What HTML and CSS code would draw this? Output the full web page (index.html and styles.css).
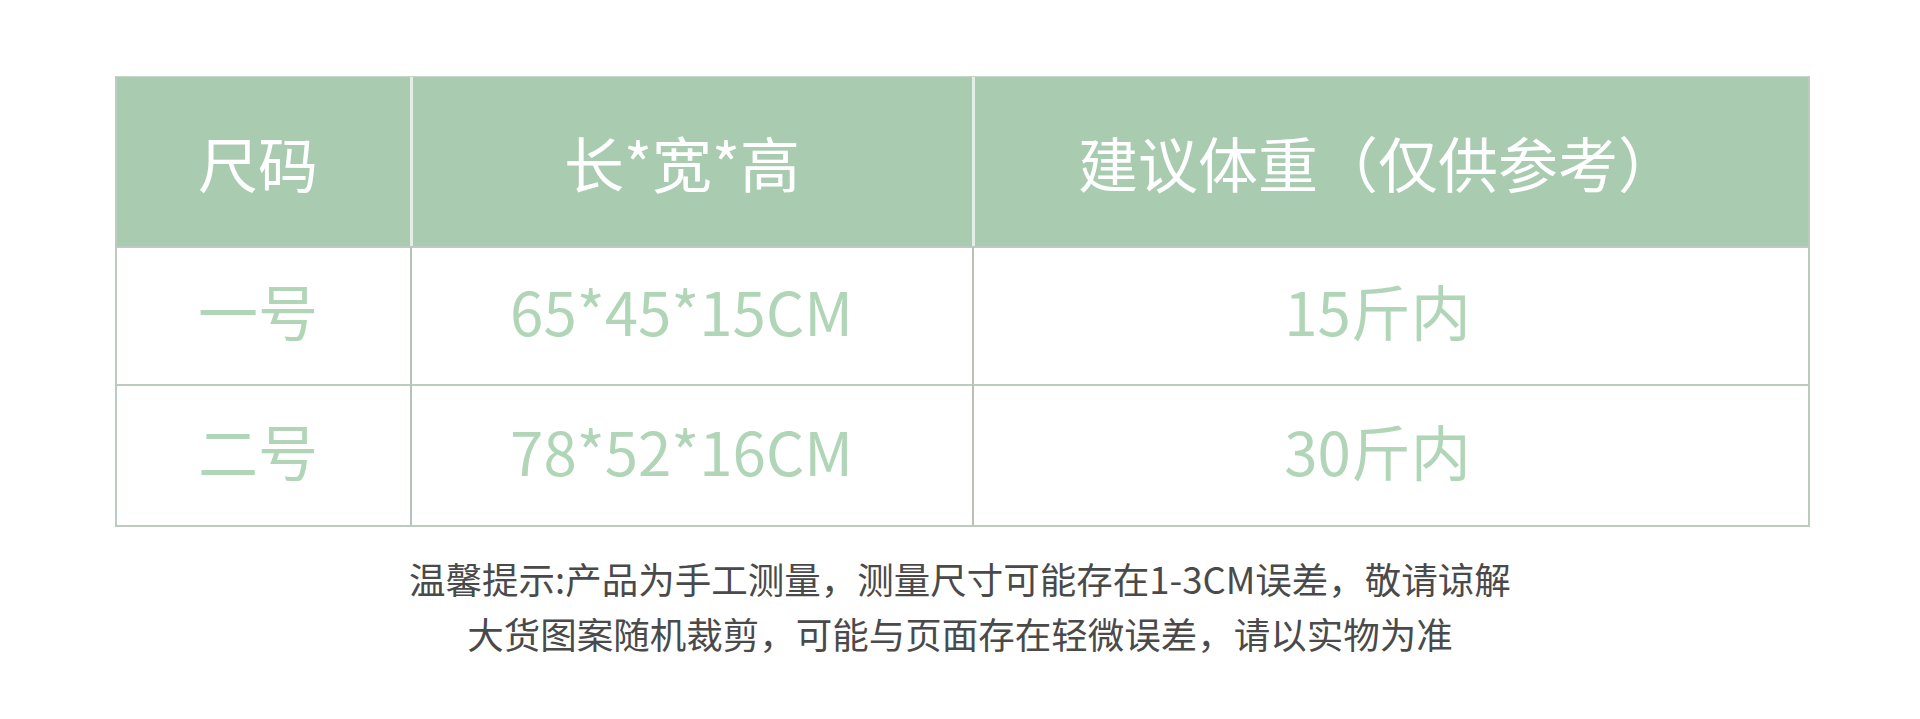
FILE: index.html
```html
<!DOCTYPE html>
<html lang="zh-CN">
<head>
<meta charset="utf-8">
<link rel="stylesheet" href="styles.css">
</head>
<body>
<div class="page">
  <div class="size-table">
    <div class="cell head c1">尺码</div>
    <div class="cell head c2">长*宽*高</div>
    <div class="cell head c3">建议体重（仅供参考）</div>
    <div class="cell body c1">一号</div>
    <div class="cell body c2">65*45*15CM</div>
    <div class="cell body c3">15斤内</div>
    <div class="cell body c1">二号</div>
    <div class="cell body c2">78*52*16CM</div>
    <div class="cell body c3">30斤内</div>
  </div>
  <div class="note">
    <p>温馨提示:产品为手工测量，测量尺寸可能存在1-3CM误差，敬请谅解</p>
    <p>大货图案随机裁剪，可能与页面存在轻微误差，请以实物为准</p>
  </div>
</div>
</body>
</html>
```
FILE: styles.css
```css
html, body {
  margin: 0;
  padding: 0;
  background: #ffffff;
}
body {
  font-family: "Noto Sans CJK SC", "Noto Sans", sans-serif;
}
.page {
  width: 1920px;
  height: 719px;
  padding-top: 76px;
  box-sizing: border-box;
  display: flex;
  flex-direction: column;
  align-items: center;
}
.size-table {
  width: 1695px;
  margin-left: 4px;
  display: grid;
  grid-template-columns: 293px 562px 1fr;
  grid-template-rows: 169px 138px 141px;
  border: 2px solid #bccbbf;
  border-top: 1px solid #c5d6c8;
  box-sizing: border-box;
}
.cell {
  display: flex;
  align-items: center;
  justify-content: center;
  box-sizing: border-box;
  font-size: 60px;
  line-height: 1;
}
.c1 {
  padding-right: 10px;
}
.c2 {
  padding-right: 20px;
}
.c3 {
  padding-right: 26px;
}
.head {
  background: #a9cbb0;
  color: #ffffff;
  padding-top: 0;
  border-left: 3px solid #e3eee5;
}
.head:first-child {
  border-left: none;
}
.body {
  color: #b0d6b7;
  padding-bottom: 12px;
  border-top: 2px solid #bccbbf;
  border-left: 2px solid #b5c2b8;
}
.body.c1 {
  border-left: none;
}
.note {
  margin-top: 24px;
  text-align: center;
  color: #4a4a4a;
  font-size: 36.5px;
  line-height: 55px;
}
.note p {
  margin: 0;
}
```
